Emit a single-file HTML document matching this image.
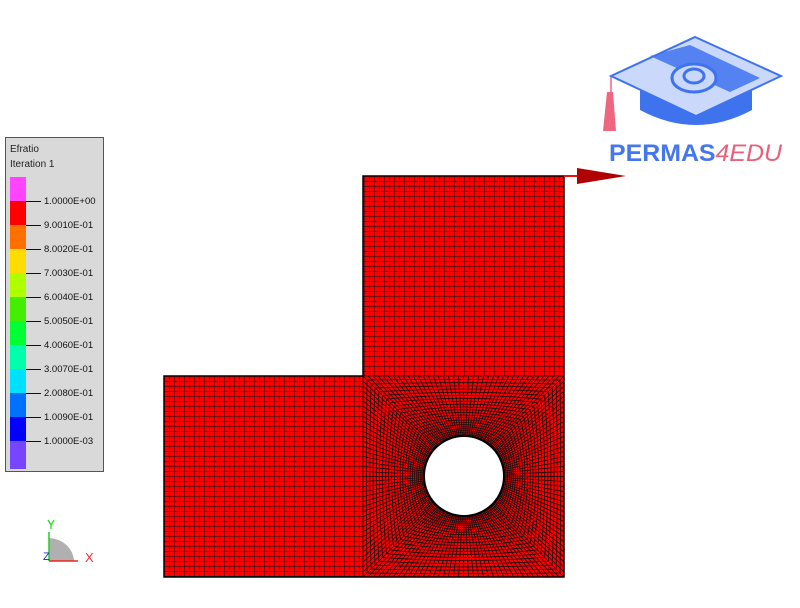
<!DOCTYPE html>
<html><head><meta charset="utf-8"><style>
body{margin:0;width:800px;height:608px;background:#fff;overflow:hidden;position:relative;font-family:"Liberation Sans",sans-serif}
#leg{position:absolute;left:5px;top:137px;width:99px;height:335px;background:#d9d9d9;border:1px solid #555;box-sizing:border-box}
#leg .t{position:absolute;left:4px;font-size:10px;color:#222}
.sw{position:absolute;left:4px;width:16px;height:24px}
.lb{position:absolute;left:20px;font-size:9.5px;color:#111;white-space:nowrap;line-height:10px}
.lb:before{content:"";display:inline-block;width:15px;height:1px;background:#111;vertical-align:middle;margin-right:3px}
</style></head><body>
<div id="leg">
<div class="t" style="top:6px">Efratio</div>
<div class="t" style="top:21px">Iteration 1</div>
<div class="sw" style="top:39px;background:#ff44ff"></div>
<div class="sw" style="top:63px;background:#ff0000"></div>
<div class="sw" style="top:87px;background:#ff7000"></div>
<div class="sw" style="top:111px;background:#ffdd00"></div>
<div class="sw" style="top:135px;background:#b0ff00"></div>
<div class="sw" style="top:159px;background:#44ee00"></div>
<div class="sw" style="top:183px;background:#00ff33"></div>
<div class="sw" style="top:207px;background:#00ffaa"></div>
<div class="sw" style="top:231px;background:#00e0ff"></div>
<div class="sw" style="top:255px;background:#0070ff"></div>
<div class="sw" style="top:279px;background:#0000ff"></div>
<div class="sw" style="top:303px;background:#7744ff;height:28px"></div>
<div class="lb" style="top:59px">1.0000E+00</div>
<div class="lb" style="top:83px">9.0010E-01</div>
<div class="lb" style="top:107px">8.0020E-01</div>
<div class="lb" style="top:131px">7.0030E-01</div>
<div class="lb" style="top:155px">6.0040E-01</div>
<div class="lb" style="top:179px">5.0050E-01</div>
<div class="lb" style="top:203px">4.0060E-01</div>
<div class="lb" style="top:227px">3.0070E-01</div>
<div class="lb" style="top:251px">2.0080E-01</div>
<div class="lb" style="top:275px">1.0090E-01</div>
<div class="lb" style="top:299px">1.0000E-03</div>
</div>
<svg width="800" height="608" style="position:absolute;left:0;top:0">
<defs><pattern id="g" x="164" y="176" width="5" height="5" patternUnits="userSpaceOnUse"><rect width="5" height="5" fill="#ff0000"/><path d="M0 0H5M0 0V5" stroke="#111" stroke-width="1"/></pattern></defs>
<rect x="363" y="176" width="201" height="201" fill="url(#g)"/>
<rect x="164" y="376" width="200" height="201" fill="url(#g)"/>
<rect x="363" y="376" width="201" height="201" fill="#ff0000"/>
<g id="rad" stroke="#111" stroke-width="0.8" fill="none"></g>
<circle cx="464" cy="476" r="40" fill="#fff" stroke="#000" stroke-width="2"/>
<path d="M363 176H564V577H164V376H363Z" fill="none" stroke="#000" stroke-width="1.5"/>
<line x1="564" y1="176" x2="580" y2="176" stroke="#ee1111" stroke-width="2"/>
<polygon points="577,168 626,176 577,184" fill="#b00000"/>
<path d="M48 520l3 5 3-5M51 525v4" stroke="#22dd22" fill="none" stroke-width="1.3"/>
<path d="M49 561V538A26 24 0 0 1 74 561Z" fill="#b0b0b0"/>
<line x1="49" y1="561" x2="49" y2="532" stroke="#22cc22" stroke-width="1.5"/>
<line x1="49" y1="561" x2="78" y2="561" stroke="#ee2222" stroke-width="1.5"/>
<text x="43" y="560" font-size="11" fill="#2222dd" font-family="Liberation Sans">Z</text>
<text x="85" y="562" font-size="13" fill="#ee3333" font-family="Liberation Sans">X</text>
<path d="M603 131L607 92H613L616 131Z" fill="#ee6680"/>
<line x1="611" y1="77" x2="611" y2="92" stroke="#ee6680" stroke-width="1.5"/>
<path d="M640 82V110Q696 140 752 110V82Z" fill="#3f73ee"/>
<polygon points="695,37 781,76 696,116 611,76" fill="#c9d8fb" stroke="#3f73ee" stroke-width="2"/>
<polygon points="690,45 760,78 730,92 650,56" fill="#3f73ee" opacity="0.85"/>
<ellipse cx="694" cy="78" rx="22" ry="14" fill="#c9d8fb" stroke="#3f73ee" stroke-width="3"/>
<ellipse cx="694" cy="76" rx="10" ry="7" fill="none" stroke="#3f73ee" stroke-width="3"/>
<text x="609" y="161" font-size="24" font-weight="bold" fill="#4477ee" font-family="Liberation Sans" textLength="173" lengthAdjust="spacingAndGlyphs">PERMAS<tspan fill="#e8607a" font-style="italic" font-weight="normal">4EDU</tspan></text>
</svg>
<script>
var cx=464,cy=476,R=40,x0=363,y0=376,x1=564,y1=577,g=document.getElementById('rad'),M=24,d='';
function sq(s){s=((s%160)+160)%160;var side=Math.floor(s/40),f=(s%40)/40;
if(side==0)return[x1,y1-(y1-y0)*f];if(side==1)return[x1-(x1-x0)*f,y0];if(side==2)return[x0,y0+(y1-y0)*f];return[x0+(x1-x0)*f,y1];}
function ci(s){var a=s/160*2*Math.PI;return[cx+R*Math.cos(a),cy-R*Math.sin(a)];}
function pt(s,t){var p=sq(s+20),c=ci(s);return[c[0]+(p[0]-c[0])*t,c[1]+(p[1]-c[1])*t];}
function tt(k){return Math.pow(k/M,1.35);}
for(var s=0;s<160;s++){var a=pt(s,0),b=pt(s,1);d+='M'+a[0].toFixed(1)+' '+a[1].toFixed(1)+'L'+b[0].toFixed(1)+' '+b[1].toFixed(1);}
for(var k=1;k<=M;k++){var t=tt(k);for(var s=0;s<=160;s++){var p=pt(s,t);d+=(s?'L':'M')+p[0].toFixed(1)+' '+p[1].toFixed(1);}}
var e=document.createElementNS('http://www.w3.org/2000/svg','path');e.setAttribute('d',d);g.appendChild(e);
</script>
</body></html>
